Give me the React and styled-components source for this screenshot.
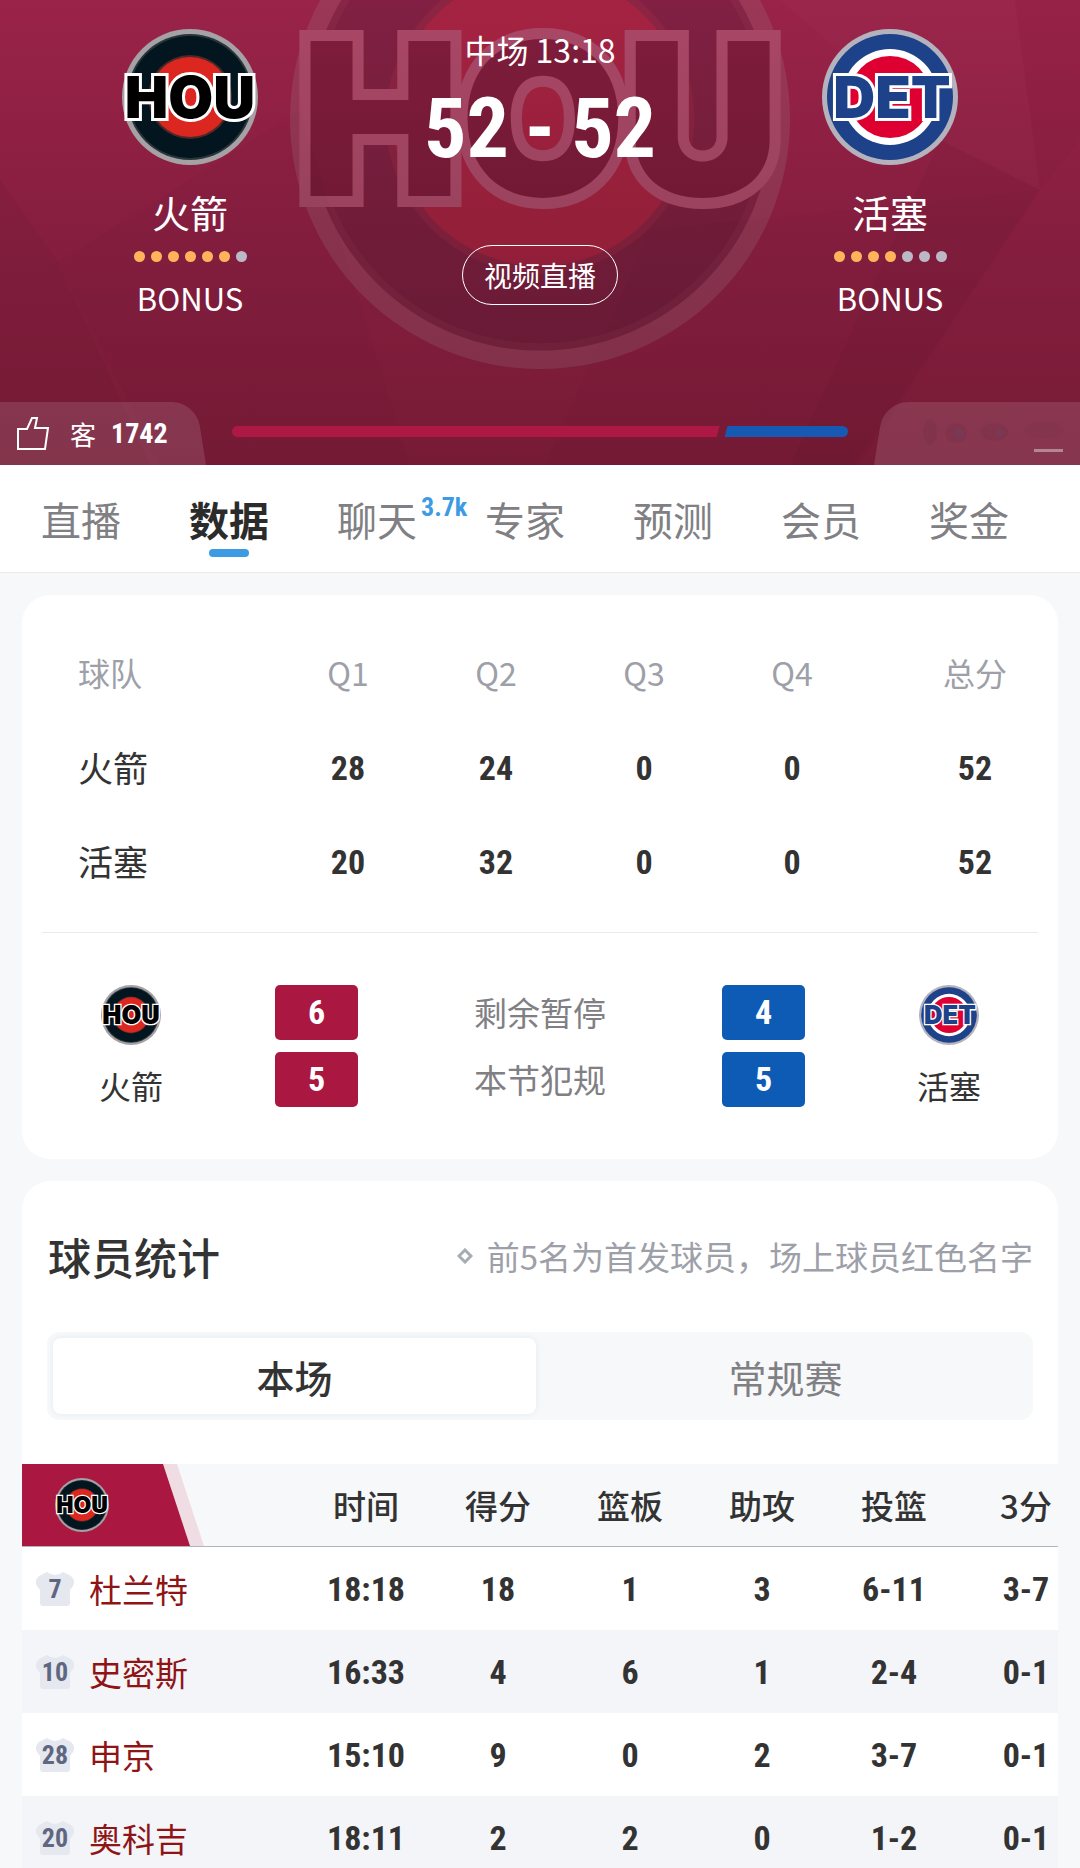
import { useState } from 'react';
import styled, { createGlobalStyle } from 'styled-components';

const tabs = [
  { name: '直播' },
  { name: '数据' },
  { name: '聊天', count: '3.7k' },
  { name: '专家' },
  { name: '预测' },
  { name: '会员' },
  { name: '奖金' },
];

const quarters = [
  { team: '火箭', scores: [28, 24, 0, 0, 52] },
  { team: '活塞', scores: [20, 32, 0, 0, 52] },
];

const statNames = ['时间', '得分', '篮板', '助攻', '投篮', '3分'];

const players = [
  { number: 7, name: '杜兰特', stats: ['18:18', 18, 1, 3, '6-11', '3-7'] },
  { number: 10, name: '史密斯', stats: ['16:33', 4, 6, 1, '2-4', '0-1'] },
  { number: 28, name: '申京', stats: ['15:10', 9, 0, 2, '3-7', '0-1'] },
  { number: 20, name: '奥科吉', stats: ['18:11', 2, 2, 0, '1-2', '0-1'] },
];

const HouLogo = () => (
  <LogoSvg viewBox="0 0 136 136" role="img" aria-label="HOU">
    <circle cx="68" cy="68" r="68" fill="#a5a1a4" />
    <circle cx="68" cy="68" r="63" fill="#28363a" />
    <circle cx="68" cy="68" r="61" fill="#03151f" />
    <circle cx="68" cy="68" r="42" fill="#4a2a28" />
    <circle cx="68" cy="68" r="40" fill="#dc2620" />
    <LogoText x="68" y="89" fill="#000">
      HOU
    </LogoText>
  </LogoSvg>
);

const DetLogo = () => (
  <LogoSvg viewBox="0 0 136 136" role="img" aria-label="DET">
    <circle cx="68" cy="68" r="68" fill="#b3b2bd" />
    <circle cx="68" cy="68" r="63" fill="#1d428a" />
    <circle cx="68" cy="68" r="48" fill="#fff" />
    <circle cx="68" cy="68" r="41" fill="#dd0031" />
    <LogoText x="70" y="89" fill="#1d428a">
      DET
    </LogoText>
  </LogoSvg>
);

const Dots = ({ left }) => (
  <DotRow>
    {[0, 1, 2, 3, 4, 5, 6].map((i) => (
      <Dot key={i} $on={i < left} />
    ))}
  </DotRow>
);

const TeamColumn = ({ logo, name, left }) => (
  <Team>
    <BigLogo>{logo}</BigLogo>
    <TeamName>{name}</TeamName>
    <Dots left={left} />
    <Bonus>BONUS</Bonus>
  </Team>
);

const ScoreHeader = () => (
  <Header>
    <Facets viewBox="0 0 1080 465" preserveAspectRatio="none" aria-hidden="true">
      <polygon points="0,180 58,262 0,310" fill="#000" opacity="0.03" />
      <polygon points="58,262 300,110 410,465 160,465" fill="#000" opacity="0.015" />
      <polygon points="58,262 0,310 0,465 150,465" fill="#000" opacity="0.03" />
      <polygon points="1015,0 1040,190 940,140 780,0" fill="#fff" opacity="0.015" />
      <polygon points="1040,190 940,140 790,465 855,465" fill="#000" opacity="0.03" />
      <polygon points="1080,140 1040,190 1015,0 1080,0" fill="#000" opacity="0.02" />
      <polygon points="650,230 545,465 860,465 1040,190" fill="#000" opacity="0.015" />
    </Facets>
    <Watermark aria-hidden="true">
      <HouLogo />
    </Watermark>
    <ScoreRow>
      <TeamColumn logo={<HouLogo />} name="火箭" left={6} />
      <Middle>
        <Clock>中场 13:18</Clock>
        <Score>
          <span>52</span>
          <span>-</span>
          <span>52</span>
        </Score>
        <LiveButton type="button">视频直播</LiveButton>
      </Middle>
      <TeamColumn logo={<DetLogo />} name="活塞" left={4} />
    </ScoreRow>
    <SupportRow>
      <AwayLike type="button" aria-label="客 1742">
        <ThumbIcon viewBox="0 0 34 36" aria-hidden="true">
          <path d="M2 13h9l5-11h5l-2 10h13l-3 21H2z" />
        </ThumbIcon>
        <LikeLabel>客</LikeLabel>
        <LikeCount>1742</LikeCount>
      </AwayLike>
      <SupportBar>
        <AwayShare />
        <HomeShare />
      </SupportBar>
      <HomeLike type="button" aria-label="主">
        <Smudge viewBox="0 0 150 44" aria-hidden="true">
          <g fill="#5b2038" opacity="0.12">
            <ellipse cx="10" cy="20" rx="7" ry="13" />
            <ellipse cx="36" cy="21" rx="11" ry="10" />
            <ellipse cx="74" cy="20" rx="14" ry="9" />
            <ellipse cx="124" cy="18" rx="20" ry="9" opacity="0.4" />
          </g>
          <circle cx="39" cy="21" r="5" fill="#5f4a66" opacity="0.3" />
          <circle cx="80" cy="21" r="4" fill="#5f4a66" opacity="0.3" />
          <rect x="114" y="37" width="29" height="3" fill="#c9a5b4" opacity="0.7" />
        </Smudge>
      </HomeLike>
    </SupportRow>
  </Header>
);

const QuarterCard = () => (
  <Card>
    <QuarterTable>
      <thead>
        <QuarterRow>
          <QuarterHead scope="col">球队</QuarterHead>
          <QuarterHead scope="col">Q1</QuarterHead>
          <QuarterHead scope="col">Q2</QuarterHead>
          <QuarterHead scope="col">Q3</QuarterHead>
          <QuarterHead scope="col">Q4</QuarterHead>
          <QuarterHead scope="col">总分</QuarterHead>
        </QuarterRow>
      </thead>
      <tbody>
        {quarters.map(({ team, scores }) => (
          <QuarterRow key={team}>
            <QuarterTeam scope="row">{team}</QuarterTeam>
            {scores.map((score, i) => (
              <QuarterScore key={i}>{score}</QuarterScore>
            ))}
          </QuarterRow>
        ))}
      </tbody>
    </QuarterTable>
    <Divider />
    <FoulGrid>
      <FoulTeam>
        <MidLogo>
          <HouLogo />
        </MidLogo>
        火箭
      </FoulTeam>
      <FoulColumn>
        <FoulBox $color="#aa1842">6</FoulBox>
        <FoulBox $color="#aa1842">5</FoulBox>
      </FoulColumn>
      <FoulColumn>
        <FoulLabel>剩余暂停</FoulLabel>
        <FoulLabel>本节犯规</FoulLabel>
      </FoulColumn>
      <FoulColumn>
        <FoulBox $color="#0d5bb5">4</FoulBox>
        <FoulBox $color="#0d5bb5">5</FoulBox>
      </FoulColumn>
      <FoulTeam>
        <MidLogo>
          <DetLogo />
        </MidLogo>
        活塞
      </FoulTeam>
    </FoulGrid>
  </Card>
);

const PlayerCard = () => {
  const [range, setRange] = useState('本场');

  return (
    <Card>
      <CardHeader>
        <CardTitle>球员统计</CardTitle>
        <Note>
          <Diamond viewBox="0 0 16 16" aria-hidden="true">
            <path d="M8 2l6 6-6 6-6-6z" />
          </Diamond>
          前5名为首发球员，场上球员红色名字
        </Note>
      </CardHeader>
      <Segmented>
        {['本场', '常规赛'].map((name) => (
          <Segment key={name} type="button" $active={name === range} onClick={() => setRange(name)}>
            {name}
          </Segment>
        ))}
      </Segmented>
      <TableScroll>
        <PlayerTable>
          <thead>
            <PlayerHeadRow>
              <TeamCell scope="col">
                <TeamFlag viewBox="0 0 182 82" aria-hidden="true">
                  <path d="M0 0h155l27 82H0z" fill="#f0dde4" />
                  <path d="M0 0h141l27 82H0z" fill="#aa1842" />
                </TeamFlag>
                <SmallLogo>
                  <HouLogo />
                </SmallLogo>
              </TeamCell>
              {statNames.map((name) => (
                <StatHead key={name} scope="col">
                  {name}
                </StatHead>
              ))}
            </PlayerHeadRow>
          </thead>
          <tbody>
            {players.map(({ number, name, stats }) => (
              <PlayerRow key={number}>
                <PlayerCell scope="row">
                  <Jersey>
                    <JerseyShape viewBox="0 0 38 34" aria-hidden="true">
                      <path d="M11 0q8 6 16 0l8 4q5 5 2 10l-3 4v13q0 3-3 3H7q-3 0-3-3V18l-3-4q-3-5 2-10z" />
                    </JerseyShape>
                    <JerseyNumber>{number}</JerseyNumber>
                  </Jersey>
                  {name}
                </PlayerCell>
                {stats.map((stat, i) => (
                  <Stat key={i}>{stat}</Stat>
                ))}
              </PlayerRow>
            ))}
          </tbody>
        </PlayerTable>
      </TableScroll>
    </Card>
  );
};

const App = () => {
  const [current, setCurrent] = useState('数据');

  return (
    <>
      <GlobalStyle />
      <ScoreHeader />
      <TabBar>
        {tabs.map(({ name, count }) => (
          <Tab key={name} type="button" $active={name === current} onClick={() => setCurrent(name)}>
            {name}
            {count && <TabCount>{count}</TabCount>}
          </Tab>
        ))}
      </TabBar>
      <Content>
        <QuarterCard />
        <PlayerCard />
      </Content>
    </>
  );
};

export default App;

const GlobalStyle = createGlobalStyle`
  * {
    box-sizing: border-box;
  }

  body {
    margin: 0;
    background: #f7f8fa;
    color: #333;
    font-family: 'Noto Sans CJK SC', sans-serif;
  }

  button {
    border: none;
    background: none;
    padding: 0;
    font-family: inherit;
    cursor: pointer;
  }
`;

const numberFont = "'Roboto Condensed', 'Liberation Sans Narrow', Roboto, sans-serif";

const Header = styled.header`
  position: relative;
  overflow: hidden;
  padding-top: 29px;
  background: linear-gradient(#9a2349, #861e3f 50%, #761b36);
  color: #fff;
`;

const Facets = styled.svg`
  position: absolute;
  inset: 0;
  width: 100%;
  height: 100%;
`;

const Watermark = styled.div`
  position: absolute;
  top: -131px;
  left: 50%;
  width: 500px;
  height: 500px;
  margin-left: -250px;
  opacity: 0.16;
`;

const LogoSvg = styled.svg`
  display: block;
  width: 100%;
  height: 100%;
  overflow: visible;
`;

const LogoText = styled.text`
  font-family: Inter, sans-serif;
  font-size: 58px;
  font-weight: 900;
  text-anchor: middle;
  stroke: #fff;
  stroke-width: 6px;
  paint-order: stroke;
`;

const ScoreRow = styled.div`
  position: relative;
  display: grid;
  grid-template-columns: 19fr 16fr 19fr;
`;

const Team = styled.div`
  display: flex;
  flex-direction: column;
  align-items: center;
`;

const BigLogo = styled.div`
  width: 136px;
  height: 136px;
`;

const TeamName = styled.div`
  margin-top: 21px;
  font-size: 38px;
  line-height: 52px;
`;

const DotRow = styled.div`
  display: flex;
  gap: 6px;
  margin-top: 13px;
`;

const Dot = styled.span`
  width: 11px;
  height: 11px;
  border-radius: 50%;
  background: ${({ $on }) => ($on ? '#ffb45c' : '#bcb8c6')};
`;

const Bonus = styled.div`
  margin-top: 14px;
  font-size: 31px;
  line-height: 44px;
`;

const Middle = styled.div`
  display: flex;
  flex-direction: column;
  align-items: center;
`;

const Clock = styled.div`
  font-size: 32px;
  line-height: 40px;
`;

const Score = styled.div`
  display: flex;
  gap: 16px;
  margin-top: 10px;
  font-family: ${numberFont};
  font-size: 84px;
  font-weight: 700;
  line-height: 100px;
`;

const LiveButton = styled.button`
  width: 156px;
  height: 60px;
  margin-top: 66px;
  border: 1px solid #fff;
  border-radius: 30px;
  color: #fff;
  font-size: 28px;
  line-height: 40px;
`;

const SupportRow = styled.div`
  position: relative;
  display: flex;
  align-items: center;
  margin-top: 82px;
`;

const Like = styled.button`
  position: relative;
  display: flex;
  align-items: center;
  width: 206px;
  height: 63px;
  color: #fff;

  &::before {
    content: '';
    position: absolute;
    inset: 0;
    background: rgba(255, 255, 255, 0.12);
  }
`;

const AwayLike = styled(Like)`
  padding-left: 16px;

  &::before {
    border-top-right-radius: 24px;
    transform: skewX(9deg);
    transform-origin: bottom;
  }
`;

const HomeLike = styled(Like)`
  justify-content: flex-end;
  padding-right: 10px;

  &::before {
    border-top-left-radius: 24px;
    transform: skewX(-9deg);
    transform-origin: bottom;
  }
`;

const ThumbIcon = styled.svg`
  width: 34px;
  height: 36px;
  fill: none;
  stroke: #fff;
  stroke-width: 2;
`;

const LikeLabel = styled.span`
  margin-left: 20px;
  font-size: 26px;
  line-height: 36px;
`;

const LikeCount = styled.span`
  margin-left: 15px;
  font-family: ${numberFont};
  font-size: 28px;
  font-weight: 700;
  line-height: 36px;
`;

const Smudge = styled.svg`
  position: relative;
  width: 150px;
  height: 44px;
`;

const SupportBar = styled.div`
  display: flex;
  flex: 1;
  height: 11px;
  margin: 0 26px 4px;
`;

const AwayShare = styled.div`
  flex: 490;
  border-radius: 6px 0 0 6px;
  background: #ad1845;
  clip-path: polygon(0 0, 100% 0, calc(100% - 3px) 100%, 0 100%);
`;

const HomeShare = styled.div`
  flex: 124;
  margin-left: 5px;
  border-radius: 0 6px 6px 0;
  background: #175ab4;
  clip-path: polygon(3px 0, 100% 0, 100% 100%, 0 100%);
`;

const TabBar = styled.nav`
  display: flex;
  padding: 0 37px 0 7px;
  border-bottom: 1px solid #e9eaec;
  background: #fff;
`;

const Tab = styled.button`
  position: relative;
  flex: 1;
  height: 107px;
  color: ${({ $active }) => ($active ? '#2b2b2b' : '#808084')};
  font-size: 40px;
  font-weight: ${({ $active }) => ($active ? 700 : 400)};

  &::after {
    content: '';
    display: ${({ $active }) => ($active ? 'block' : 'none')};
    position: absolute;
    bottom: 15px;
    left: 50%;
    width: 40px;
    height: 8px;
    margin-left: -20px;
    border-radius: 4px;
    background: #3d9be4;
  }
`;

const TabCount = styled.span`
  position: absolute;
  top: 26px;
  left: 118px;
  color: #3d9be4;
  font-family: ${numberFont};
  font-size: 26px;
  font-weight: 700;
  line-height: 32px;
`;

const Content = styled.main`
  display: flex;
  flex-direction: column;
  gap: 22px;
  padding: 22px 22px 0;
`;

const Card = styled.section`
  border-radius: 28px;
  background: #fff;
`;

const QuarterTable = styled.table`
  display: block;
  padding: 32px 0 23px;

  thead,
  tbody {
    display: block;
  }
`;

const QuarterRow = styled.tr`
  display: grid;
  grid-template-columns: 252fr repeat(4, 148fr) 192fr;
  align-items: center;
  height: 94px;

  & > :first-child {
    padding-left: 56px;
    text-align: left;
  }

  & > :last-child {
    padding-left: 26px;
  }
`;

const QuarterHead = styled.th`
  padding: 0 0 4px;
  color: #9da0a8;
  font-size: 32px;
  font-weight: 400;
`;

const QuarterTeam = styled.th`
  padding: 0 0 4px;
  font-size: 35px;
  font-weight: 400;
`;

const QuarterScore = styled.td`
  padding: 0;
  font-family: ${numberFont};
  font-size: 34px;
  font-weight: 700;
  text-align: center;
`;

const Divider = styled.div`
  height: 1px;
  margin: 0 20px;
  background: #ebebee;
`;

const FoulGrid = styled.div`
  display: grid;
  grid-template-columns: 218fr 153fr 294fr 153fr 218fr;
  align-items: center;
  justify-items: center;
  padding: 52px 0;
`;

const FoulTeam = styled.div`
  display: flex;
  flex-direction: column;
  align-items: center;
  gap: 18px;
  font-size: 32px;
  line-height: 44px;
`;

const MidLogo = styled.div`
  width: 60px;
  height: 60px;
`;

const FoulColumn = styled.div`
  display: flex;
  flex-direction: column;
  gap: 12px;
`;

const FoulBox = styled.div`
  width: 83px;
  border-radius: 5px;
  background: ${({ $color }) => $color};
  color: #fff;
  font-family: ${numberFont};
  font-size: 34px;
  font-weight: 700;
  line-height: 55px;
  text-align: center;
`;

const FoulLabel = styled.div`
  color: #808084;
  font-size: 33px;
  line-height: 55px;
`;

const CardHeader = styled.div`
  display: flex;
  align-items: center;
  justify-content: space-between;
  padding: 45px 25px 46px 26px;
`;

const CardTitle = styled.h2`
  margin: 0;
  font-size: 43px;
  font-weight: 500;
  line-height: 60px;
`;

const Note = styled.div`
  display: flex;
  align-items: center;
  color: #9da0a8;
  font-size: 33px;
  line-height: 48px;
`;

const Diamond = styled.svg`
  width: 16px;
  height: 16px;
  margin-right: 14px;
  fill: none;
  stroke: #a9abb3;
  stroke-width: 3;
`;

const Segmented = styled.div`
  display: flex;
  gap: 8px;
  margin: 0 25px;
  padding: 6px;
  border-radius: 12px;
  background: #f7f8fa;
`;

const Segment = styled.button`
  flex: 1;
  height: 76px;
  border-radius: 8px;
  background: ${({ $active }) => ($active ? '#fff' : 'transparent')};
  box-shadow: ${({ $active }) => ($active ? '0 0 6px #e3e9f2' : 'none')};
  color: ${({ $active }) => ($active ? '#333' : '#808084')};
  font-size: 38px;
  font-weight: ${({ $active }) => ($active ? 500 : 400)};
`;

const TableScroll = styled.div`
  margin-top: 44px;
  overflow-x: auto;
  scrollbar-width: none;
`;

const PlayerTable = styled.table`
  display: block;
  min-width: 1070px;

  thead,
  tbody {
    display: block;
  }
`;

const StatRow = styled.tr`
  display: grid;
  grid-template-columns: 278fr repeat(6, 132fr);
  align-items: center;
  height: 83px;
`;

const PlayerHeadRow = styled(StatRow)`
  border-bottom: 1px solid #b1b4b9;
  background: #f7f8fa;
`;

const PlayerRow = styled(StatRow)`
  background: #fff;

  &:nth-child(even) {
    background: #f3f5f8;
  }
`;

const TeamCell = styled.th`
  position: relative;
  height: 82px;
  padding: 14px 0 0 33px;
`;

const TeamFlag = styled.svg`
  position: absolute;
  top: 0;
  left: 0;
  width: 182px;
  height: 82px;
`;

const SmallLogo = styled.div`
  position: relative;
  width: 54px;
  height: 54px;
`;

const StatHead = styled.th`
  padding: 0;
  font-size: 33px;
  font-weight: 500;
`;

const PlayerCell = styled.th`
  display: flex;
  align-items: center;
  gap: 15px;
  padding: 0 0 0 14px;
  color: #8f1416;
  font-size: 33px;
  font-weight: 400;
`;

const Jersey = styled.span`
  display: grid;
  place-items: center;
  width: 38px;
  height: 34px;

  & > * {
    grid-area: 1 / 1;
  }
`;

const JerseyShape = styled.svg`
  width: 38px;
  height: 34px;
  fill: #e5e8ef;
`;

const JerseyNumber = styled.span`
  color: #5f6680;
  font-family: ${numberFont};
  font-size: 26px;
  font-weight: 700;
  line-height: 34px;
`;

const Stat = styled.td`
  padding: 0;
  font-family: ${numberFont};
  font-size: 34px;
  font-weight: 700;
  text-align: center;
`;
